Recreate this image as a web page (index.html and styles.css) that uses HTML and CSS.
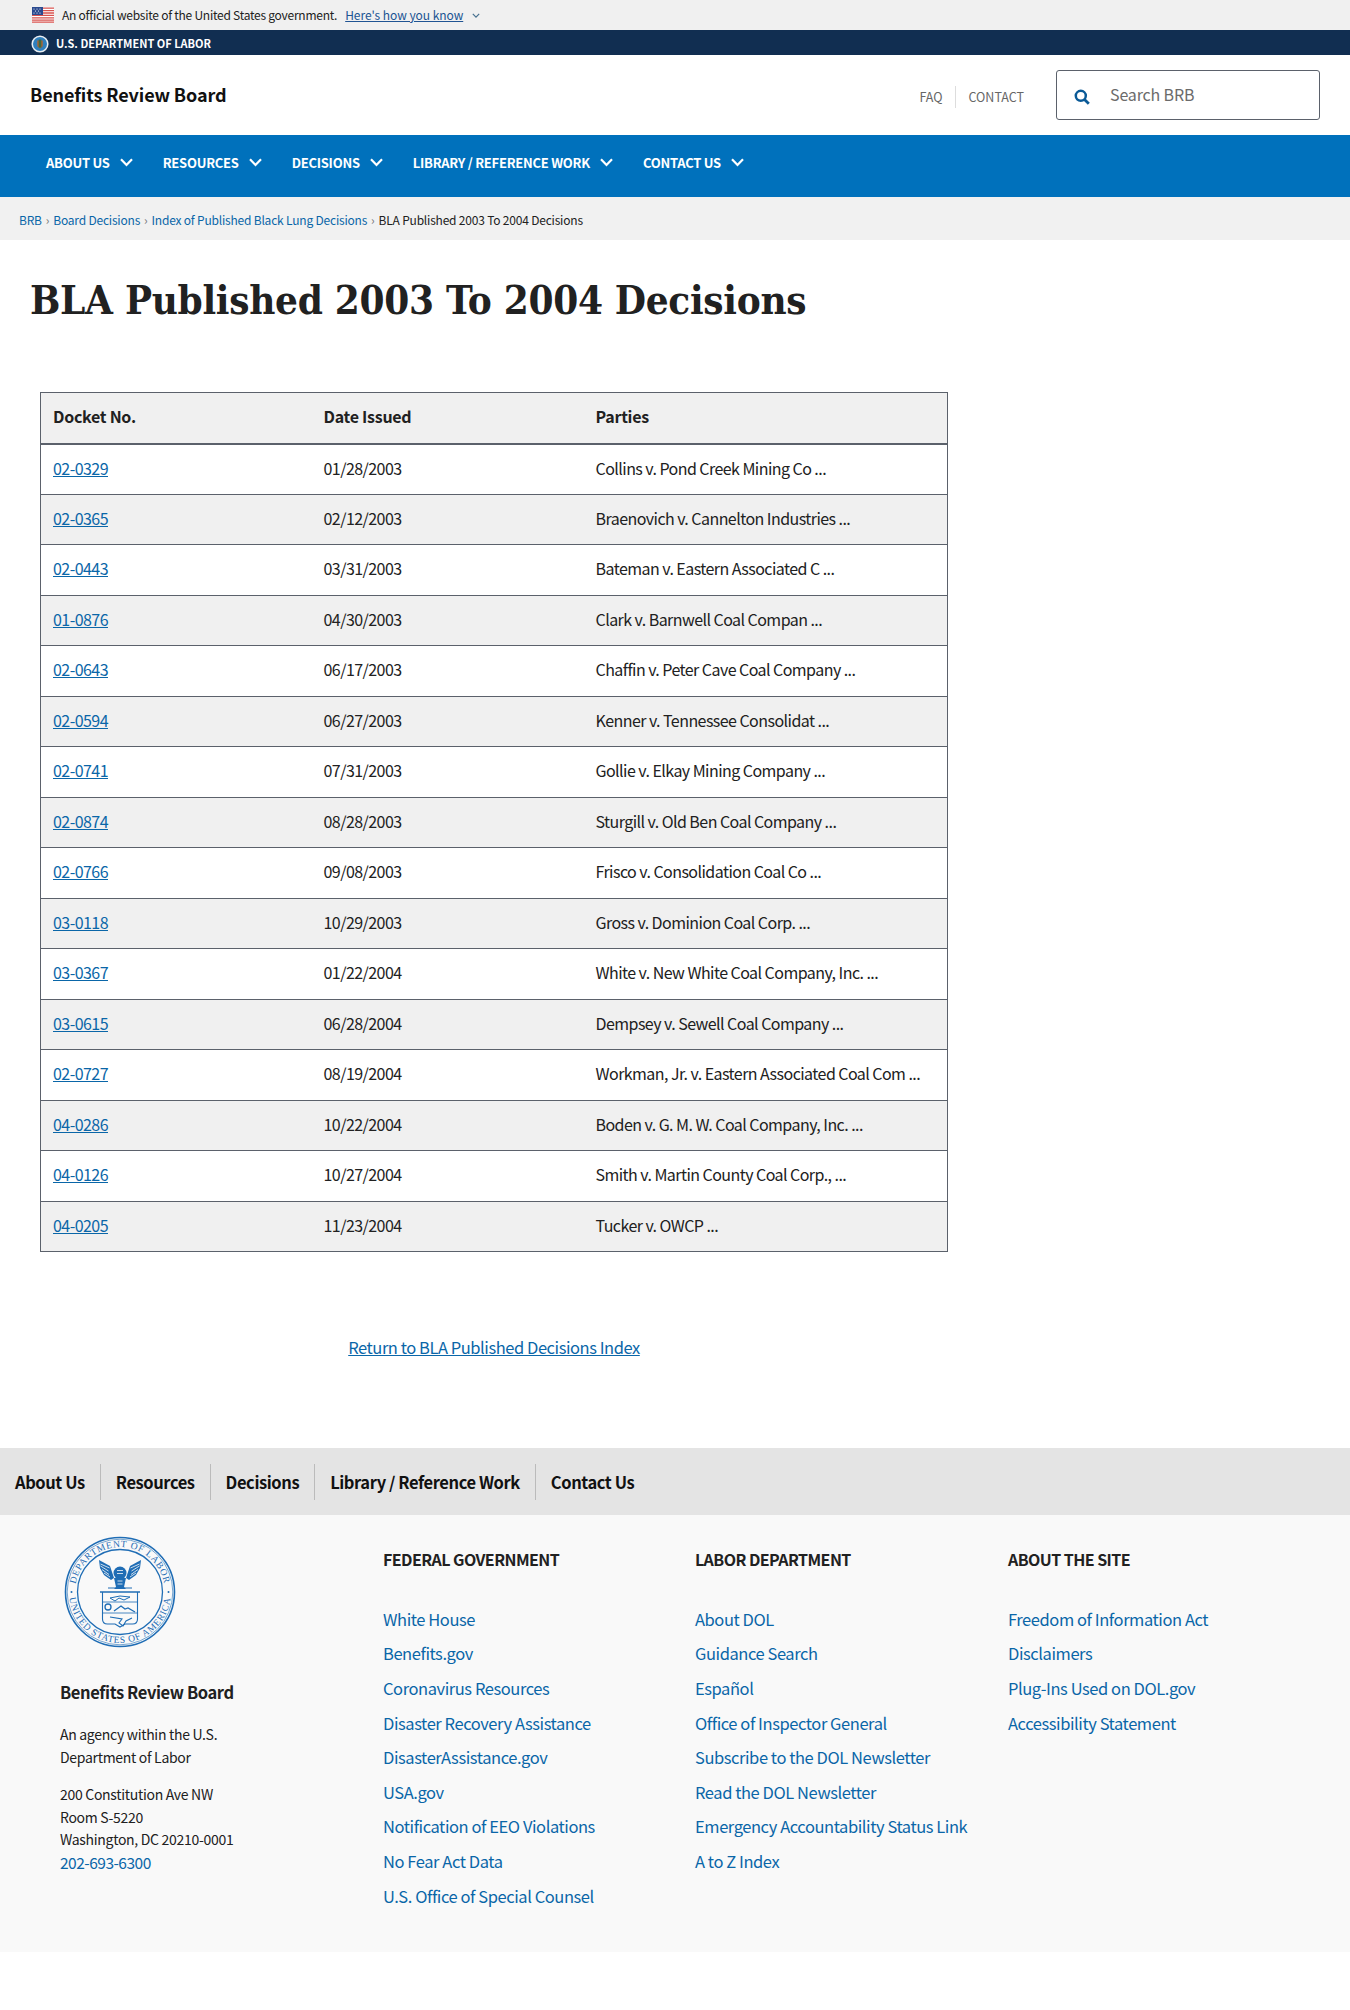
FILE: index.html
```html
<!DOCTYPE html>
<html lang="en">
<head>
<meta charset="utf-8">
<title>BLA Published 2003 To 2004 Decisions</title>
<link rel="stylesheet" href="styles.css">
</head>
<body>
<div class="gov-banner">
  <svg class="flag" viewBox="0 0 22 16" width="22" height="16" aria-hidden="true">
    <rect width="22" height="16" fill="#fff"/>
    <path d="M0 1.2h22M0 3.6h22M0 6h22M0 8.4h22M0 10.8h22M0 13.2h22M0 15.2h22" stroke="#d8534f" stroke-width="1.3"/>
    <rect width="11" height="8" fill="#2b4a8f"/>
    <path d="M2 2h.01M5 2h.01M8 2h.01M3.5 4h.01M6.500 4h.01M2 6h.01M5 6h.01M8 6h.01" stroke="#fff" stroke-width="1.200" stroke-linecap="round"/>
  </svg>
  <span>An official website of the United States government.</span>
  <a href="#" class="how">Here's how you know</a>
  <svg class="mini-chev" viewBox="0 0 10 6" width="8" height="5" aria-hidden="true"><path d="M1 1l4 4 4-4" fill="none" stroke="#46708f" stroke-width="1.500"/></svg>
</div>
<div class="dol-bar">
  <svg class="dol-seal" viewBox="0 0 20 20" width="18" height="18" aria-hidden="true">
    <circle cx="10" cy="10" r="9.500" fill="#e9eef2"/>
    <circle cx="10" cy="10" r="7.800" fill="#2f7fbd"/>
    <path d="M7 6h6v6.500l-3 2.500-3-2.500z" fill="#b5652f"/>
    <path d="M8.500 5h3v9h-3z" fill="#3a6b4a"/>
  </svg>
  <span>U.S. DEPARTMENT OF LABOR</span>
</div>
<header class="site-header">
  <a href="#" class="site-name">Benefits Review Board</a>
  <div class="header-right">
    <nav class="util-links">
      <a href="#">FAQ</a>
      <a href="#">CONTACT</a>
    </nav>
    <div class="search">
      <svg viewBox="0 0 16 16" width="16" height="16" aria-hidden="true"><circle cx="6.800" cy="6.800" r="5" fill="none" stroke="#0a5a97" stroke-width="2.500"/><path d="M10.500 10.500l4.300 4.300" stroke="#0a5a97" stroke-width="2.800"/></svg>
      <span>Search BRB</span>
    </div>
  </div>
</header>
<nav class="main-nav">
  <a href="#">ABOUT US<svg viewBox="0 0 13 9" width="13" height="9" aria-hidden="true"><path d="M1 1.200L6.500 7 12 1.200" fill="none" stroke="#fff" stroke-width="2.200"/></svg></a>
  <a href="#">RESOURCES<svg viewBox="0 0 13 9" width="13" height="9" aria-hidden="true"><path d="M1 1.200L6.500 7 12 1.200" fill="none" stroke="#fff" stroke-width="2.200"/></svg></a>
  <a href="#">DECISIONS<svg viewBox="0 0 13 9" width="13" height="9" aria-hidden="true"><path d="M1 1.200L6.500 7 12 1.200" fill="none" stroke="#fff" stroke-width="2.200"/></svg></a>
  <a href="#">LIBRARY / REFERENCE WORK<svg viewBox="0 0 13 9" width="13" height="9" aria-hidden="true"><path d="M1 1.200L6.500 7 12 1.200" fill="none" stroke="#fff" stroke-width="2.200"/></svg></a>
  <a href="#">CONTACT US<svg viewBox="0 0 13 9" width="13" height="9" aria-hidden="true"><path d="M1 1.200L6.500 7 12 1.200" fill="none" stroke="#fff" stroke-width="2.200"/></svg></a>
</nav>
<div class="breadcrumb">
  <a href="#">BRB</a><i>›</i><a href="#">Board Decisions</a><i>›</i><a href="#">Index of Published Black Lung Decisions</a><i>›</i><span>BLA Published 2003 To 2004 Decisions</span>
</div>
<main class="content">
  <h1>BLA Published 2003 To 2004 Decisions</h1>
  <table class="decisions">
    <thead><tr><th>Docket No.</th><th>Date Issued</th><th>Parties</th></tr></thead>
    <tbody>
      <tr><td><a href="#">02-0329</a></td><td>01/28/2003</td><td>Collins v. Pond Creek Mining Co ...</td></tr>
      <tr><td><a href="#">02-0365</a></td><td>02/12/2003</td><td>Braenovich v. Cannelton Industries ...</td></tr>
      <tr><td><a href="#">02-0443</a></td><td>03/31/2003</td><td>Bateman v. Eastern Associated C ...</td></tr>
      <tr><td><a href="#">01-0876</a></td><td>04/30/2003</td><td>Clark v. Barnwell Coal Compan ...</td></tr>
      <tr><td><a href="#">02-0643</a></td><td>06/17/2003</td><td>Chaffin v. Peter Cave Coal Company ...</td></tr>
      <tr><td><a href="#">02-0594</a></td><td>06/27/2003</td><td>Kenner v. Tennessee Consolidat ...</td></tr>
      <tr><td><a href="#">02-0741</a></td><td>07/31/2003</td><td>Gollie v. Elkay Mining Company ...</td></tr>
      <tr><td><a href="#">02-0874</a></td><td>08/28/2003</td><td>Sturgill v. Old Ben Coal Company ...</td></tr>
      <tr><td><a href="#">02-0766</a></td><td>09/08/2003</td><td>Frisco v. Consolidation Coal Co ...</td></tr>
      <tr><td><a href="#">03-0118</a></td><td>10/29/2003</td><td>Gross v. Dominion Coal Corp. ...</td></tr>
      <tr><td><a href="#">03-0367</a></td><td>01/22/2004</td><td>White v. New White Coal Company, Inc. ...</td></tr>
      <tr><td><a href="#">03-0615</a></td><td>06/28/2004</td><td>Dempsey v. Sewell Coal Company ...</td></tr>
      <tr><td><a href="#">02-0727</a></td><td>08/19/2004</td><td>Workman, Jr. v. Eastern Associated Coal Com ...</td></tr>
      <tr><td><a href="#">04-0286</a></td><td>10/22/2004</td><td>Boden v. G. M. W. Coal Company, Inc. ...</td></tr>
      <tr><td><a href="#">04-0126</a></td><td>10/27/2004</td><td>Smith v. Martin County Coal Corp., ...</td></tr>
      <tr><td><a href="#">04-0205</a></td><td>11/23/2004</td><td>Tucker v. OWCP ...</td></tr>
    </tbody>
  </table>
  <p class="return"><a href="#">Return to BLA Published Decisions Index</a></p>
</main>
<nav class="footer-nav">
  <a href="#">About Us</a><a href="#">Resources</a><a href="#">Decisions</a><a href="#">Library / Reference Work</a><a href="#">Contact Us</a>
</nav>
<footer class="footer">
  <div class="agency">
    <svg class="seal" viewBox="0 0 112 112" width="112" height="112" role="img" aria-label="Department of Labor seal">
      <defs>
        <path id="arcTop" d="M17 78.500a45 45 0 1 1 78 0"/>
        <path id="arcBot" d="M11.800 30.500a51 51 0 1 0 88.400 0"/>
      </defs>
      <g fill="none" stroke="#1f6db5">
        <circle cx="56" cy="56" r="54.500" stroke-width="1.600"/>
        <circle cx="56" cy="56" r="52.800" stroke-width=".6"/>
        <circle cx="56" cy="56" r="42.500" stroke-width="1.300"/>
      </g>
      <text class="seal-text"><textPath href="#arcTop" startOffset="50%" text-anchor="middle">DEPARTMENT OF LABOR</textPath></text>
      <text class="seal-text"><textPath href="#arcBot" startOffset="50%" text-anchor="middle">UNITED STATES OF AMERICA</textPath></text>
      <g fill="#1f6db5">
        <circle cx="7.500" cy="56" r="1"/><circle cx="104.500" cy="56" r="1"/>
        <path d="M35 24l11 6 4 12-3 2-7-5-4-7z"/>
        <path d="M77 24l-11 6-4 12 3 2 7-5 4-7z"/>
        <circle cx="56" cy="37" r="6.500"/>
        <path d="M50 42h12l-2 9 2 2H50l2-2z"/>
      </g>
      <path d="M36.500 28l9 4M36.500 30l8 5M38 33.500l7 5M40 37l6 4M75.500 28l-9 4M75.500 30l-8 5M74 33.500l-7 5M72 37l-6 4" stroke="#f9f9f9" stroke-width=".8"/>
      <path d="M53 34.500h6M53 37.500h6M53.500 45h5M53.500 48h5" stroke="#f9f9f9" stroke-width=".8"/>
      <path d="M44 52h24" stroke="#1f6db5" stroke-width="1"/>
      <g fill="none" stroke="#1f6db5">
        <path d="M36 56h40" stroke-width="1.600"/>
        <path d="M38.500 56v27c0 3 2 5 5 5h7.500l5 3 5-3h7.500c3 0 5-2 5-5V56" stroke-width="1.100"/>
        <path d="M38.500 66h35M38.500 77h35" stroke-width=".8"/>
        <path d="M46 62l10-2 10 1-6 3-5-2-4 3z" stroke-width="1"/>
        <path d="M50 75l7-5 4 3 3-1 7 4" stroke-width="1.300"/>
        <circle cx="44" cy="71" r="3" stroke-width="1.300"/>
        <path d="M46 81l12 2-3 4 4 3 3-5 6-3" stroke-width="1.100"/>
      </g>
    </svg>
    <h2>Benefits Review Board</h2>
    <p>An agency within the U.S.<br>Department of Labor</p>
    <p class="address">200 Constitution Ave NW<br>Room S-5220<br>Washington, DC 20210-0001<br><a href="#" class="phone">202-693-6300</a></p>
  </div>
  <div class="col">
    <h3>FEDERAL GOVERNMENT</h3>
    <a href="#">White House</a><a href="#">Benefits.gov</a><a href="#">Coronavirus Resources</a><a href="#">Disaster Recovery Assistance</a><a href="#">DisasterAssistance.gov</a><a href="#">USA.gov</a><a href="#">Notification of EEO Violations</a><a href="#">No Fear Act Data</a><a href="#">U.S. Office of Special Counsel</a>
  </div>
  <div class="col">
    <h3>LABOR DEPARTMENT</h3>
    <a href="#">About DOL</a><a href="#">Guidance Search</a><a href="#">Español</a><a href="#">Office of Inspector General</a><a href="#">Subscribe to the DOL Newsletter</a><a href="#">Read the DOL Newsletter</a><a href="#">Emergency Accountability Status Link</a><a href="#">A to Z Index</a>
  </div>
  <div class="col">
    <h3>ABOUT THE SITE</h3>
    <a href="#">Freedom of Information Act</a><a href="#">Disclaimers</a><a href="#">Plug-Ins Used on DOL.gov</a><a href="#">Accessibility Statement</a>
  </div>
</footer>
</body>
</html>
```
FILE: styles.css
```css
* { box-sizing: border-box; }
html, body { margin: 0; padding: 0; }
body { background: #fff; color: #212121; font-family: "Noto Sans CJK SC", "Lato", sans-serif; font-size: 16px; min-height: 2010px; }
a { color: #0a66a8; }

.gov-banner { height: 30px; background: #f0f0f0; display: flex; align-items: center; padding-left: 32px; font-size: 12px; line-height: 18px; letter-spacing: -.25px; }
.flag { margin-right: 8px; }
.gov-banner .how { margin-left: 8px; color: #205493; letter-spacing: -.05px; }
.mini-chev { margin-left: 9px; }

.dol-bar { height: 25px; background: #112e51; color: #fff; display: flex; align-items: center; padding-left: 31px; font-size: 11px; line-height: 16px; font-weight: 700; }
.dol-seal { margin-right: 7px; margin-top: 3px; }

.site-header { height: 80px; display: flex; justify-content: space-between; align-items: center; padding: 0 30px; }
.site-name { font-size: 18px; letter-spacing: -.1px; line-height: 26px; font-weight: 700; color: #111; text-decoration: none; margin-top: -2px; }
.header-right { display: flex; align-items: center; }
.util-links { display: flex; align-items: center; margin-right: 32px; margin-top: 3px; }
.util-links a { color: #666; font-size: 12.500px; text-decoration: none; line-height: 22px; }
.util-links a:first-child { padding-right: 12px; border-right: 1px solid #ddd; margin-right: 13px; }
.search { width: 264px; height: 50px; border: 1px solid #5b616b; border-radius: 3px; display: flex; align-items: center; padding-left: 17px; color: #6b6b6b; font-size: 16px; letter-spacing: -.15px; line-height: 24px; }
.search span { margin-top: -2px; }
.search svg { margin-right: 20px; margin-top: 3px; }

.main-nav { height: 62px; background: #0071bc; display: flex; align-items: center; padding: 0 0 7px 46px; gap: 30px; }
.main-nav a { color: #fff; font-size: 13px; letter-spacing: -.25px; line-height: 18px; font-weight: 700; text-decoration: none; display: flex; align-items: center; gap: 10px; }

.breadcrumb { height: 43px; background: #f1f1f1; display: flex; align-items: center; padding: 3px 0 0 19px; font-size: 12px; letter-spacing: -.2px; line-height: 18px; }
.breadcrumb a { text-decoration: none; }
.breadcrumb i { font-style: normal; color: #777; margin: 0 4px; }

.content { padding: 0 0 0 30px; }
h1 { font-family: "DejaVu Serif Condensed", "DejaVu Serif", "Liberation Serif", serif; font-stretch: condensed; font-size: 40px; letter-spacing: -.3px; font-weight: 700; margin: 31px 0 0; line-height: 58px; color: #212121; }
.decisions { margin: 63px 0 0 10px; width: 908px; border-collapse: collapse; border: 1px solid #5b616b; font-size: 16px; letter-spacing: -.55px; line-height: 24px; table-layout: fixed; }
.decisions th:nth-child(1) { width: 271px; }
.decisions th:nth-child(2) { width: 272px; }
.decisions th { text-align: left; background: #f0f0f0; height: 51px; padding: 0 12px 3px; border-bottom: 2px solid #5b616b; font-weight: 700; letter-spacing: -.27px; }
.decisions td { height: 50.530px; padding: 0 12px 3px; border-bottom: 1px solid #5b616b; }
.decisions tbody tr:nth-child(even) td { background: #f0f0f0; }
.return { margin: 83px 0 0 10px; width: 908px; text-align: center; font-size: 16.500px; letter-spacing: -.45px; line-height: 24px; }

.footer-nav { margin-top: 89px; height: 67px; background: #e4e4e4; display: flex; align-items: center; }
.footer-nav a { color: #111; font-size: 16.500px; letter-spacing: -.42px; font-weight: 700; text-decoration: none; padding: 0 15px; line-height: 36px; border-right: 1px solid #bbb; }
.footer-nav a:last-child { border-right: 0; }

.footer { height: 437px; background: #f9f9f9; display: grid; grid-template-columns: 323px 312px 313px 1fr; padding-left: 60px; }
.agency { padding-top: 21px; font-size: 14px; letter-spacing: -.3px; line-height: 22.500px; }
.seal { display: block; margin-left: 4px; }
.seal-text { font-family: "Liberation Serif", serif; font-size: 9.500px; fill: #1f6db5; letter-spacing: .7px; }
.agency h2 { font-size: 16.500px; letter-spacing: -.4px; font-weight: 700; margin: 32px 0 0; line-height: 24px; }
.agency p { margin: 19px 0 0; }
.agency .address { margin-top: 15px; }
.phone { font-size: 15.500px; letter-spacing: -.5px; text-decoration: none; }
.col { padding-top: 32px; display: flex; flex-direction: column; align-items: flex-start; }
.col h3 { font-size: 16px; letter-spacing: -.55px; font-weight: 700; margin: 0 0 35.500px; line-height: 24px; color: #212121; }
.col a { font-size: 16.500px; letter-spacing: -.43px; line-height: 24px; margin-bottom: 10.600px; text-decoration: none; }
```
